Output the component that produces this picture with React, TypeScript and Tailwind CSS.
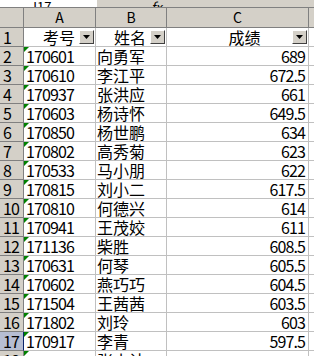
import React from 'react';

const rows: [string, string, string][] = [
  ['170601', '向勇军', '689'],
  ['170610', '李江平', '672.5'],
  ['170937', '张洪应', '661'],
  ['170603', '杨诗怀', '649.5'],
  ['170850', '杨世鹏', '634'],
  ['170802', '高秀菊', '623'],
  ['170533', '马小朋', '622'],
  ['170815', '刘小二', '617.5'],
  ['170810', '何德兴', '614'],
  ['170941', '王茂姣', '611'],
  ['171136', '柴胜', '608.5'],
  ['170631', '何琴', '605.5'],
  ['170602', '燕巧巧', '604.5'],
  ['171504', '王茜茜', '603.5'],
  ['171802', '刘玲', '603'],
  ['170917', '李青', '597.5'],
  ['', '张小计', ''],
];

const font = { fontFamily: '"Noto Sans CJK SC", "Liberation Sans", sans-serif' };

function DropBtn() {
  return (
    <span className="flex h-[14px] w-[15px] items-center justify-center border border-t-white border-l-white border-r-[#404040] border-b-[#404040] bg-[#d4d0c8]">
      <svg width="7" height="4" viewBox="0 0 7 4">
        <path d="M0 0h7L3.5 4z" fill="#000" />
      </svg>
    </span>
  );
}

function GreenFlag() {
  return (
    <svg className="absolute left-0 top-0" width="5" height="5" viewBox="0 0 5 5">
      <path d="M0 0h5L0 5z" fill="#008000" />
    </svg>
  );
}

export default function App() {
  return (
    <div className="h-[356px] w-[314px] overflow-hidden bg-white text-black" style={font}>
      {/* formula bar strip */}
      <div className="flex h-[8px] items-end overflow-hidden border-b border-[#808080] bg-[#d4d0c8] text-[13px] leading-none">
        <div className="flex h-full w-[97px] items-end overflow-hidden bg-white pl-[30px]">
          <span className="-mb-[6px]">J17</span>
        </div>
        <div className="flex h-full items-end pl-[54px]">
          <span className="-mb-[6px] italic">fx</span>
        </div>
      </div>

      {/* column header */}
      <div className="flex h-[20px] border-b border-[#808080] bg-[#d4d0c8] text-[14px] leading-[19px]">
        <div className="w-[24px] border-r border-[#808080]" />
        <div className="w-[72px] border-r border-[#808080] text-center">A</div>
        <div className="w-[71px] border-r border-[#808080] text-center">B</div>
        <div className="w-[142px] border-r border-[#808080] text-center">C</div>
        <div className="flex-1" />
      </div>

      {/* row 1: headers with filter buttons */}
      <div className="flex h-[19px] text-[16px] leading-[18px]">
        <div className="w-[24px] border-r border-b border-[#808080] bg-[#d4d0c8] pl-[3px]">1</div>
        <div className="flex w-[72px] items-center justify-end gap-[4px] border-r border-b border-[#c0c0c0] pr-[1px]">
          <span>考号</span>
          <DropBtn />
        </div>
        <div className="flex w-[71px] items-center justify-end gap-[4px] border-r border-b border-[#c0c0c0] pr-[1px]">
          <span>姓名</span>
          <DropBtn />
        </div>
        <div className="flex w-[142px] items-center border-r border-b border-[#c0c0c0] pr-[1px]">
          <span className="flex-1 pl-[30px] text-center">成绩</span>
          <DropBtn />
        </div>
        <div className="flex-1 border-b border-[#c0c0c0]" />
      </div>

      {rows.map(([id, name, score], i) => {
        const n = i + 2;
        const active = n === 17;
        return (
          <div key={n} className="flex h-[19px] text-[16px] leading-[18px]">
            <div
              className={`w-[24px] border-r border-b border-[#808080] pl-[3px] tracking-[-1px] ${
                active ? 'bg-[#b6bdd2] border-r-[#0a246a]' : 'bg-[#d4d0c8]'
              }`}
            >
              {n}
            </div>
            <div className="relative w-[72px] border-r border-b border-[#c0c0c0] pl-[2px] tracking-[-0.9px]">
              <GreenFlag />
              {id}
            </div>
            <div className="w-[71px] border-r border-b border-[#c0c0c0] pl-[1px]">{name}</div>
            <div className="w-[142px] border-r border-b border-[#c0c0c0] pr-[3px] text-right tracking-[-0.9px]">
              {score}
            </div>
            <div className="flex-1 border-b border-[#c0c0c0]" />
          </div>
        );
      })}
    </div>
  );
}
